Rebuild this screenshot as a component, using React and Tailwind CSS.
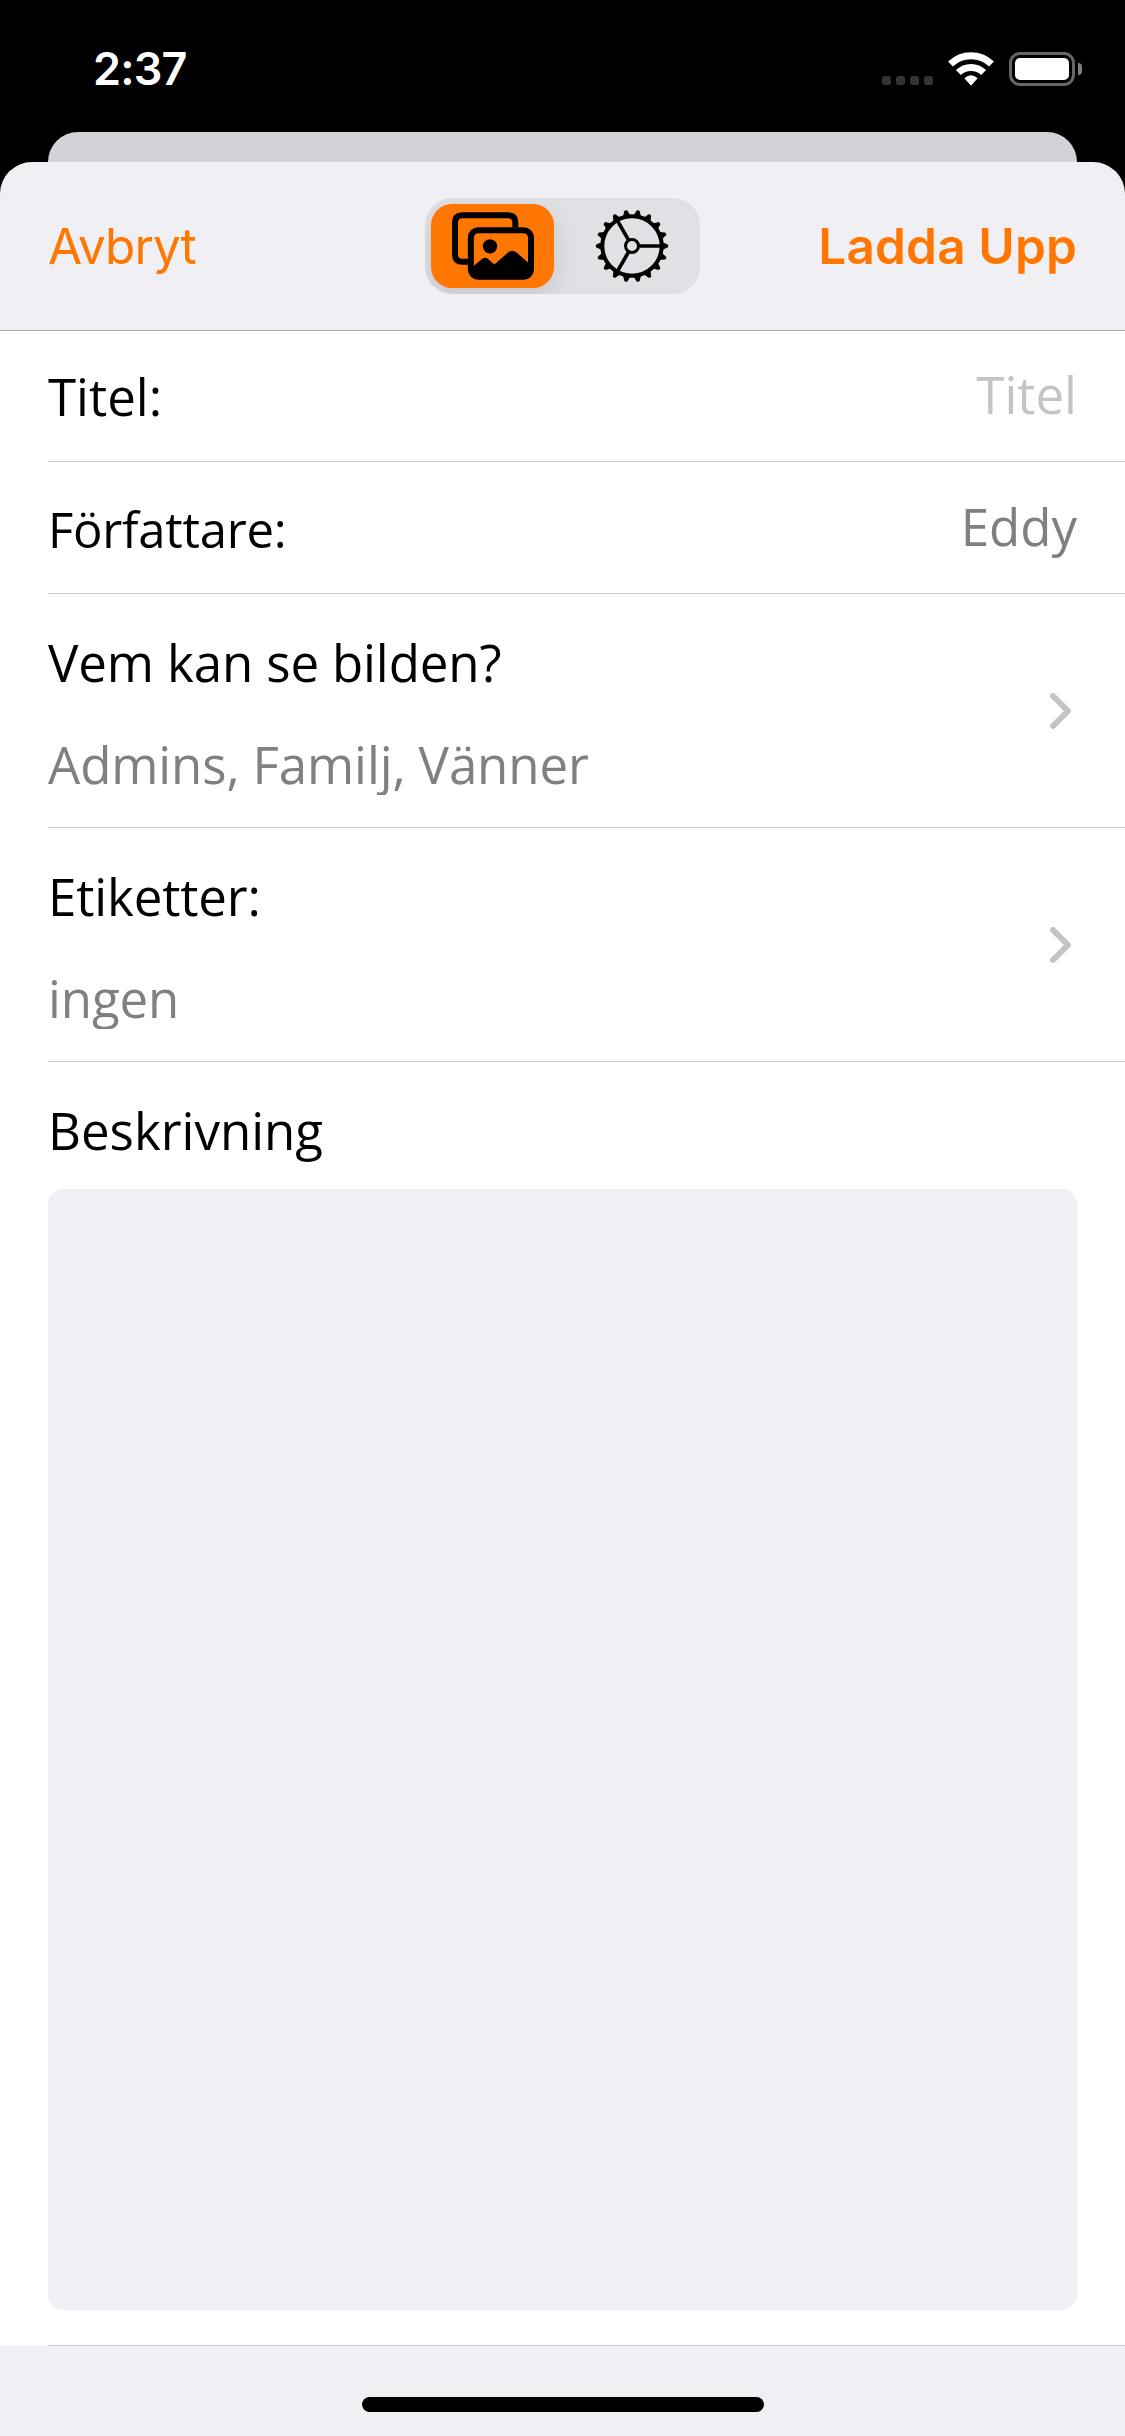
const teeth = Array.from({ length: 18 }, (_, i) => i * 20);

function Wifi() {
  return (
    <svg className="h-[34px] w-[46px]" viewBox="504 155 138 102">
      <g fill="none" stroke="#fff" strokeWidth="21">
        <path d="M511.5 191.3A88.5 88.5 0 0 1 634.5 191.3" />
        <path d="M535.1 216.5A54.5 54.5 0 0 1 610.9 216.5" />
      </g>
      <path d="M553 234Q573 216 593 234L575 254Q573 256 571 254Z" fill="#fff" />
    </svg>
  );
}

function Battery() {
  return (
    <div className="flex items-center gap-[3px]">
      <div className="h-[34px] w-[66px] rounded-[11px] border-[3px] border-[#666] p-[3px]">
        <div className="h-full rounded-[5px] bg-white" />
      </div>
      <div className="h-[12px] w-[4px] rounded-r-full bg-[#808080]" />
    </div>
  );
}

function Photos() {
  return (
    <svg className="h-[68px] w-[82px]" viewBox="156 96.5 246 204">
      <path
        d="M346 142V128Q346 106 324 106H187Q165 106 165 128V224Q165 246 187 246H206"
        fill="none"
        stroke="#000"
        strokeWidth="18"
      />
      <rect x="212.5" y="151" width="180.500" height="140" rx="22" fill="none" stroke="#000" strokeWidth="18" />
      <circle cx="270" cy="199.500" r="21.500" />
      <path d="M219 260L245 238Q255 230 265 238L283 254L324 218Q337 207 350 218L388 252V292H219Z" />
    </svg>
  );
}

function Gear() {
  return (
    <svg className="h-[74px] w-[74px]" viewBox="-111 -111 222 222">
      <circle r="89" fill="none" stroke="#000" strokeWidth="12" />
      <circle r="19.500" fill="none" stroke="#000" strokeWidth="9" />
      {[0, 120, 240].map((a) => (
        <path key={a} d="M22 0H86" stroke="#000" strokeWidth="11" transform={`rotate(${a})`} />
      ))}
      {teeth.map((a) => (
        <path key={a} d="M90 -12L107 -4.5Q111 0 107 4.5L90 12Z" transform={`rotate(${a})`} />
      ))}
    </svg>
  );
}

function Chevron() {
  return (
    <svg className="h-[36px] w-[21px] shrink-0" viewBox="0 0 21 36">
      <path d="M3 3L18 18L3 33" fill="none" stroke="#c4c4c6" strokeWidth="6" strokeLinecap="round" strokeLinejoin="round" />
    </svg>
  );
}

function FieldRow({ label, labelClass, children }) {
  return (
    <div className="ml-[48px] flex h-[132px] items-center justify-between border-b border-[#c6c6c8] pr-[48px]">
      <span className={labelClass}>{label}</span>
      {children}
    </div>
  );
}

function LinkRow({ label, value }) {
  return (
    <div className="ml-[48px] flex h-[234px] items-center justify-between border-b border-[#c6c6c8] pr-[54px]">
      <div className="mt-[5px] flex flex-col gap-[40px] tracking-[-0.12px]">
        <span>{label}</span>
        <span className="text-[#808080] [clip-path:inset(-10px_-10px_0)]">{value}</span>
      </div>
      <Chevron />
    </div>
  );
}

export default function App() {
  return (
    <div className="flex h-[2436px] w-[1125px] flex-col overflow-hidden bg-black font-['Open_Sans',sans-serif] text-[51px] leading-[62px] text-black">
      <div className="flex h-[132px] shrink-0 items-start justify-between pr-[43px] pl-[93px] font-['Inter',sans-serif]">
        <span className="mt-[39px] text-[45px] leading-[60px] font-semibold tracking-[-0.8px] text-white">2:37</span>
        <div className="mt-[52px] flex items-end gap-[15px]">
          <div className="mb-px flex gap-[5px]">
            {[0, 1, 2, 3].map((i) => (
              <div key={i} className="size-[9px] rounded-[2.5px] bg-[#333]" />
            ))}
          </div>
          <Wifi />
          <Battery />
        </div>
      </div>
      <div className="mx-[48px] h-[60px] shrink-0 rounded-t-[30px] bg-[#d3d2d7]" />
      <div className="-mt-[30px] flex grow flex-col overflow-hidden rounded-t-[32px] bg-[#efeff4]">
        <header className="grid h-[169px] shrink-0 grid-cols-[1fr_auto_1fr] items-center border-b border-[#b0b0b5] px-[48px] font-['Inter',sans-serif] text-[49.5px] text-[#ff7700]">
          <span className="tracking-[-0.9px]">Avbryt</span>
          <div className="flex h-[96px] w-[275px] items-center overflow-hidden rounded-[27px] bg-[#e0e0e5] p-[6px]">
            <div className="flex h-[84px] w-[123px] items-center justify-center rounded-[21px] bg-[#ff7700] shadow-[0_9px_24px_rgba(0,0,0,0.12)]">
              <Photos />
            </div>
            <div className="flex grow justify-center pl-[15px]">
              <Gear />
            </div>
          </div>
          <span className="text-right font-semibold tracking-[0.15px]">Ladda Upp</span>
        </header>
        <main className="flex shrink-0 flex-col bg-white">
          <div className="-mt-px">
            <FieldRow label="Titel:">
              <span className="-mt-[4px] text-[#c4c4c4]">Titel</span>
            </FieldRow>
          </div>
          <FieldRow label="Författare:" labelClass="mt-[3px] text-[49px] tracking-[-0.25px]">
            <span className="-mt-[4px] text-[#808080]">Eddy</span>
          </FieldRow>
          <LinkRow label="Vem kan se bilden?" value="Admins, Familj, Vänner" />
          <LinkRow label="Etiketter:" value="ingen" />
          <div className="ml-[48px] flex h-[1284px] flex-col border-b border-[#c6c6c8] pt-[37px] pr-[48px]">
            <span>Beskrivning</span>
            <div className="mt-[28px] h-[1121px] rounded-[15px] bg-[#efeff4]" />
          </div>
        </main>
        <div className="flex grow items-end justify-center pb-[24px]">
          <div className="h-[15px] w-[402px] rounded-full bg-black" />
        </div>
      </div>
    </div>
  );
}
